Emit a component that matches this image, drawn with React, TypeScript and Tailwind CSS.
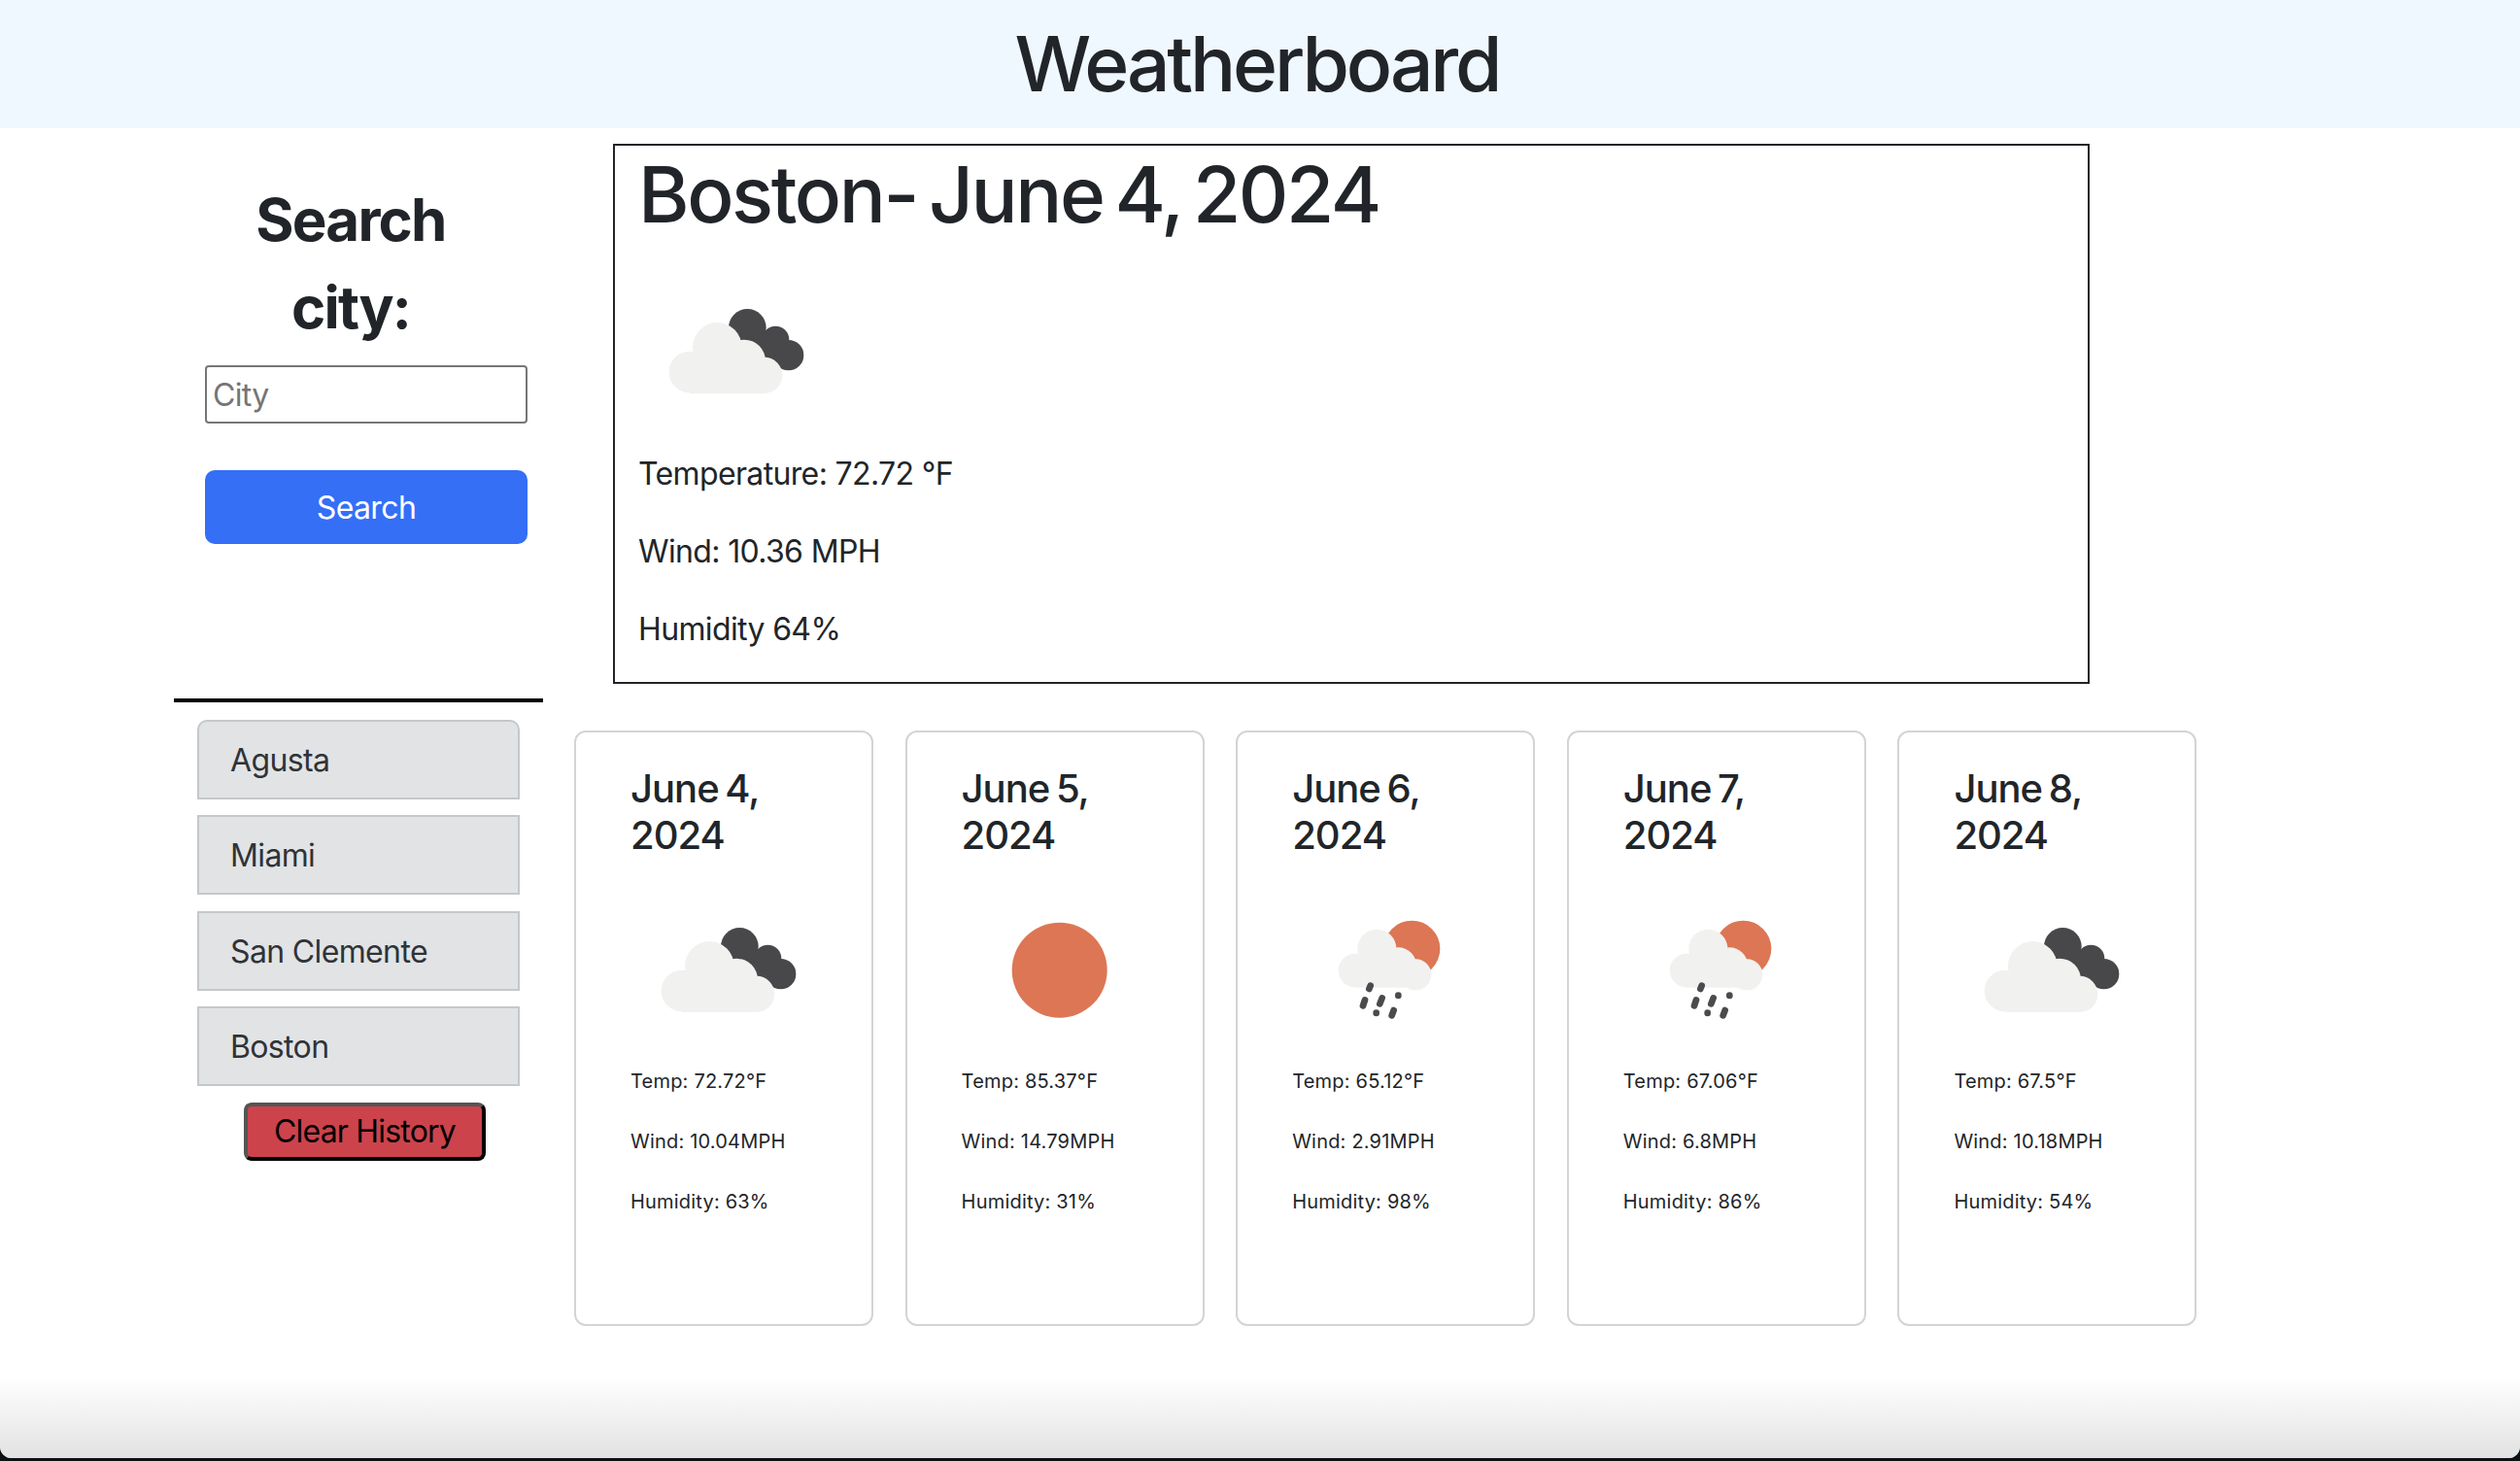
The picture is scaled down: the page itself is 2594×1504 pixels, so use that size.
const LIGHT = "#f1f1f0";
const DARK = "#48484a";
const SUN = "#dd7654";

function Clouds() {
  return (
    <svg viewBox="60 0 600 450" className="w-[200px] h-[150px] ml-[3px] blur-[0.5px]">
      <circle cx="388" cy="175" r="58" fill={DARK} />
      <circle cx="475" cy="212" r="42" fill={DARK} />
      <circle cx="515" cy="260" r="47" fill={DARK} />
      <path d="M388 175 L475 212 L515 260 L440 320 L340 250Z" fill={DARK} />
      <g fill={LIGHT}>
        <circle cx="295" cy="235" r="76" />
        <circle cx="210" cy="312" r="64" />
        <circle cx="378" cy="278" r="66" />
        <circle cx="440" cy="322" r="56" />
        <rect x="210" y="290" width="230" height="88" />
      </g>
    </svg>
  );
}

function Sun() {
  return (
    <svg viewBox="-27 -12 600 450" className="w-[200px] h-[150px] ml-px blur-[0.5px]">
      <circle cx="272" cy="236" r="147" fill={SUN} />
    </svg>
  );
}

function Rain() {
  return (
    <svg viewBox="-27 -12 600 450" className="w-[200px] h-[150px] ml-px blur-[0.5px]">
      <circle cx="340" cy="170" r="87" fill={SUN} />
      <g fill={LIGHT}>
        <circle cx="232" cy="170" r="60" />
        <circle cx="165" cy="237" r="52" />
        <circle cx="298" cy="222" r="56" />
        <circle cx="352" cy="250" r="48" />
        <rect x="165" y="220" width="190" height="70" />
      </g>
      <g stroke="#4b4b4d" strokeWidth="20" strokeLinecap="round">
        <path d="M212 284 L208 294" />
        <path d="M195 328 L189 346" />
        <path d="M248 322 L241 340" />
        <path d="M298 314 L298 315" />
        <path d="M230 368 L230 369" />
        <path d="M284 360 L278 376" />
      </g>
    </svg>
  );
}

const days = [
  { date: "June 4, 2024", icon: <Clouds />, temp: "72.72", wind: "10.04", hum: "63" },
  { date: "June 5, 2024", icon: <Sun />, temp: "85.37", wind: "14.79", hum: "31" },
  { date: "June 6, 2024", icon: <Rain />, temp: "65.12", wind: "2.91", hum: "98" },
  { date: "June 7, 2024", icon: <Rain />, temp: "67.06", wind: "6.8", hum: "86" },
  { date: "June 8, 2024", icon: <Clouds />, temp: "67.5", wind: "10.18", hum: "54" },
];

const cities = ["Agusta", "Miami", "San Clemente", "Boston"];

export default function App() {
  return (
    <div className="relative h-[1504px] w-full overflow-hidden bg-[#0c1012] font-['Inter','Liberation_Sans',sans-serif] text-[#212529]">
      <div className="h-[1501px] overflow-hidden rounded-b-[12px] bg-white">
        <header className="flex h-[132px] items-center justify-center bg-[#f0f8ff] pr-[6px]">
          <h1 className="text-[78.5px] leading-[96px] font-medium tracking-[-0.04em]">Weatherboard</h1>
        </header>

        <div className="flex pt-[16px]">
          <section className="w-[631px] shrink-0">
            <h2 className="ml-[241px] mt-[33px] w-[240px] text-center text-[60px] leading-[90px] font-bold tracking-[-0.03em]">
              Search city:
            </h2>
            <input
              placeholder="City"
              className="ml-[211px] mt-[15px] block h-[60px] w-[332px] rounded-[4px] border-2 border-[#767676] px-[6px] text-[32px] tracking-[-0.02em] placeholder:text-[#757575]"
            />
            <button className="ml-[211px] mt-[48px] block h-[76px] w-[332px] rounded-[10px] bg-[#346ff6] pt-[2px] text-[32px] tracking-[-0.02em] text-white">
              Search
            </button>
          </section>
          <section className="h-[556px] w-[1520px] border-2 border-[#212529] pl-[24px] pt-[2px]">
            <h2 className="text-[80px] leading-[96px] font-medium tracking-[-0.03em] [word-spacing:-7px]">
              Boston- June 4, 2024
            </h2>
            <div className="mt-[31px]">
              <Clouds />
            </div>
            <p className="mt-[35px] text-[32px] leading-[48px] tracking-[-0.02em]">Temperature: 72.72 °F</p>
            <p className="mt-[32px] text-[32px] leading-[48px] tracking-[-0.02em]">Wind: 10.36 MPH</p>
            <p className="mt-[32px] text-[32px] leading-[48px] tracking-[-0.02em]">Humidity 64%</p>
          </section>
        </div>

        <div className="ml-[179px] mt-[15px] h-[4px] w-[380px] bg-black" />

        <div className="flex">
          <aside className="w-[591px] shrink-0 pl-[203px] pt-[18px]">
            <ul className="flex w-[332px] flex-col gap-[16.3px]">
              {cities.map((c, i) => (
                <li
                  key={c}
                  className={`flex h-[82px] items-center border-2 border-[#c4c8cb] bg-[#e2e3e5] pl-[32px] pt-[2px] text-[32px] tracking-[-0.02em] text-[#2f3337] ${
                    i === 0 ? "rounded-t-[10px]" : ""
                  }`}
                >
                  {c}
                </li>
              ))}
            </ul>
            <button className="ml-[48px] mt-[17px] block h-[60px] w-[249px] rounded-[8px] border-4 border-t-[#555555] border-l-[#555555] border-r-black border-b-black bg-[#cc434c] text-[32px] tracking-[-0.025em] text-black">
              Clear History
            </button>
          </aside>
          <div className="flex gap-[32.6px] pt-[29px]">
            {days.map((d) => (
              <article
                key={d.date}
                className="h-[613px] w-[308px] rounded-[12px] border-2 border-[#d3d4d5] pl-[56px] pr-[40px] pt-[34px]"
              >
                <h5 className="text-[40px] leading-[48px] font-medium tracking-[-0.025em] [word-spacing:-3px]">
                  {d.date}
                </h5>
                <div className="mt-[32px]">{d.icon}</div>
                <p className="mt-[29px] text-[20px] leading-[36px] tracking-[0.01em]">Temp: {d.temp}°F</p>
                <p className="mt-[26px] text-[20px] leading-[36px] tracking-[0.01em]">Wind: {d.wind}MPH</p>
                <p className="mt-[26px] text-[20px] leading-[36px] tracking-[0.01em]">Humidity: {d.hum}%</p>
              </article>
            ))}
          </div>
        </div>
      </div>
      <div className="pointer-events-none absolute bottom-[3px] left-0 right-0 h-[84px] rounded-b-[12px] bg-gradient-to-b from-[#ffffff00] to-[#e2e2e2]" />
    </div>
  );
}
